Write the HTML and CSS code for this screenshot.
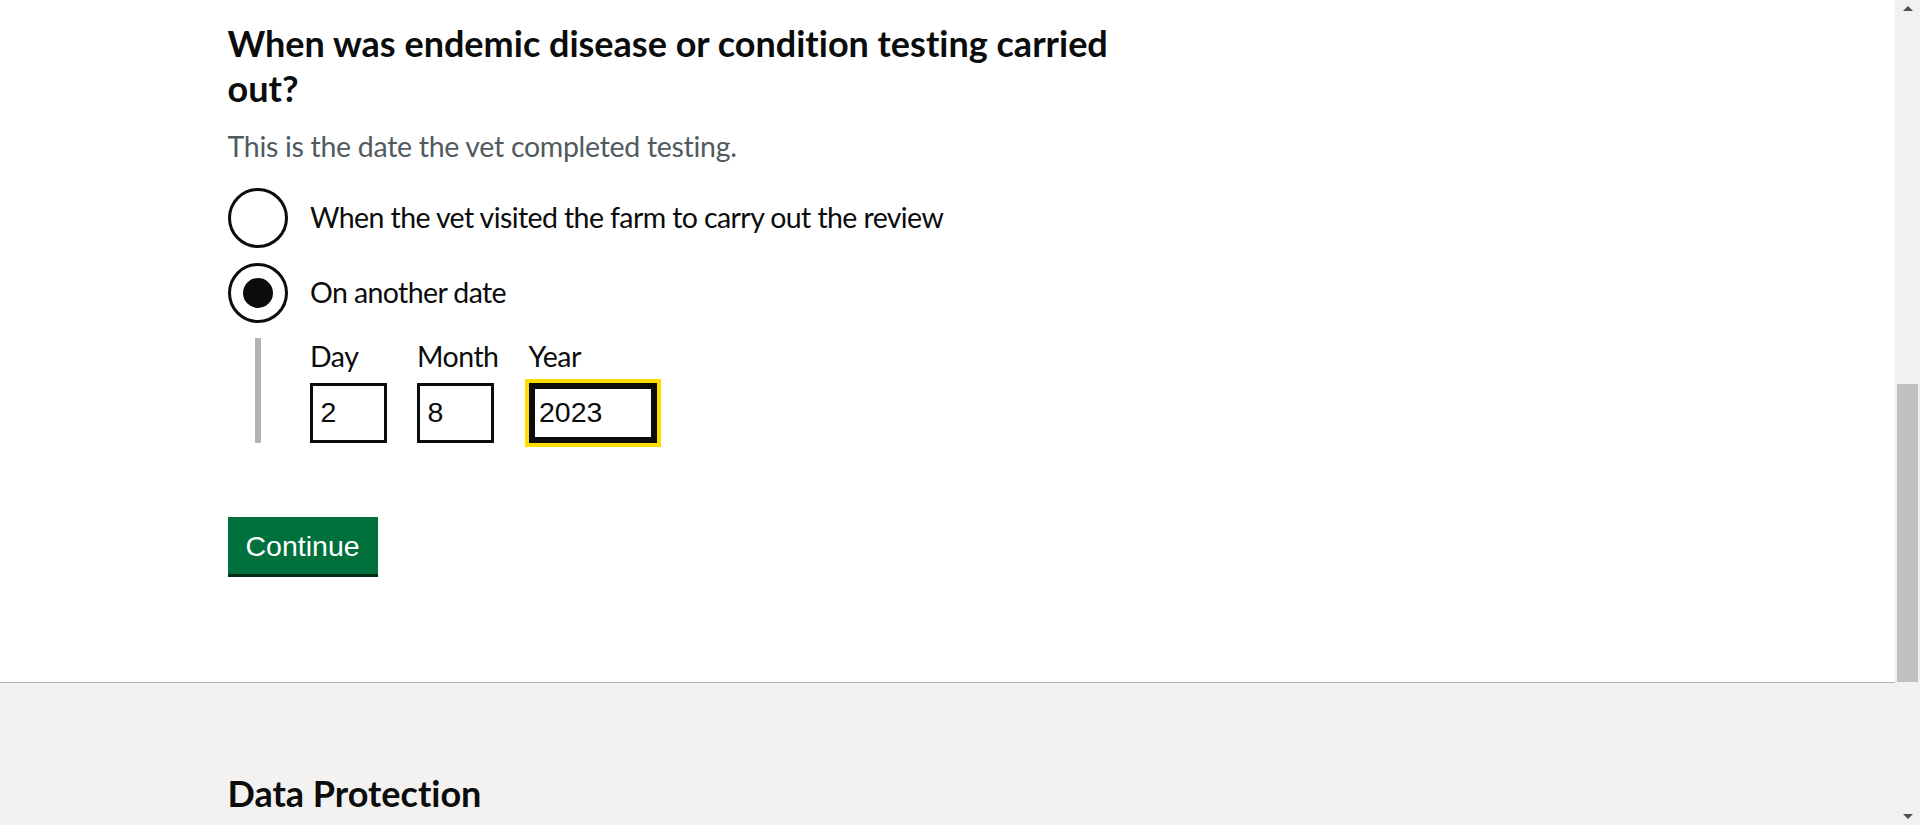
FILE: index.html
```html
<!DOCTYPE html>
<html lang="en">
<head>
<meta charset="utf-8">
<title>When was endemic disease or condition testing carried out?</title>
<link rel="stylesheet" href="styles.css">
</head>
<body>
<div class="viewport">
  <div class="page">
    <main class="main">
      <div class="container">
        <form class="form">
          <fieldset class="fieldset">
            <legend class="legend">When was endemic disease or condition testing carried out?</legend>
            <div class="hint">This is the date the vet completed testing.</div>
            <div class="radios">
              <div class="radio-item">
                <span class="radio-circle"></span>
                <label class="radio-label">When the vet visited the farm to carry out the review</label>
              </div>
              <div class="radio-item">
                <span class="radio-circle radio-checked"></span>
                <label class="radio-label">On another date</label>
              </div>
              <div class="conditional">
                <div class="date-input">
                  <div class="date-item">
                    <label class="date-label">Day</label>
                    <input class="input input-day" type="text" value="2">
                  </div>
                  <div class="date-item">
                    <label class="date-label">Month</label>
                    <input class="input input-month" type="text" value="8">
                  </div>
                  <div class="date-item">
                    <label class="date-label">Year</label>
                    <input class="input input-year input-focus" type="text" value="2023">
                  </div>
                </div>
              </div>
            </div>
          </fieldset>
          <button class="button" type="button">Continue</button>
        </form>
      </div>
    </main>
    <footer class="footer">
      <div class="container">
        <h2 class="footer-heading">Data Protection</h2>
      </div>
    </footer>
  </div>
  <div class="scrollbar">
    <div class="sb-arrow"><span class="tri-up"></span></div>
    <div class="sb-track"><div class="sb-thumb"></div></div>
    <div class="sb-arrow"><span class="tri-down"></span></div>
  </div>
</div>
</body>
</html>
```

FILE: styles.css
```css
html, body {
  margin: 0;
  padding: 0;
  background: #ffffff;
}

.viewport {
  display: flex;
  height: 825px;
  overflow: hidden;
}

.page {
  flex: 1;
  min-width: 0;
  font-family: Lato, "Noto Sans", sans-serif;
  font-variant-ligatures: none;
  color: #0b0c0c;
}

.container {
  width: 1440px;
  margin: 0 auto;
}

.main {
  padding-top: 21px;
  padding-bottom: 60px;
}

.fieldset {
  border: 0;
  margin: 0 0 59px 0;
  padding: 0;
  min-width: 0;
  width: 950px;
}

.legend {
  padding: 0;
  font-size: 36px;
  line-height: 45px;
  font-weight: 700;
  margin-bottom: 17px;
  display: table;
  max-width: 100%;
}

.hint {
  font-size: 28.5px;
  line-height: 37.5px;
  letter-spacing: -0.3px;
  color: #505a5f;
  margin-bottom: 22px;
}

.radios {
  display: flex;
  flex-direction: column;
}

.radio-item {
  display: flex;
  align-items: center;
  min-height: 60px;
  margin-bottom: 15px;
}

.radio-circle {
  box-sizing: border-box;
  width: 60px;
  height: 60px;
  border: 3px solid #0b0c0c;
  border-radius: 50%;
  flex: none;
  display: flex;
  align-items: center;
  justify-content: center;
}

.radio-checked::after {
  content: "";
  width: 30px;
  height: 30px;
  border-radius: 50%;
  background: #0b0c0c;
}

.radio-label {
  font-size: 28.5px;
  line-height: 37.5px;
  letter-spacing: -0.6px;
  padding: 0 22.5px;
}

.conditional {
  margin-left: 27px;
  margin-bottom: 15px;
  border-left: 6px solid #b1b4b6;
  padding-left: 49.5px;
}

.date-input {
  display: flex;
  align-items: flex-start;
}

.date-item {
  display: flex;
  flex-direction: column;
  margin-right: 30px;
}

.date-label {
  font-size: 28.5px;
  line-height: 37.5px;
  letter-spacing: -0.5px;
  margin-bottom: 7.5px;
}

.input {
  box-sizing: border-box;
  height: 60px;
  margin: 0;
  padding: 7.5px;
  border: 3px solid #0b0c0c;
  border-radius: 0;
  font-family: "Liberation Sans", Arial, sans-serif;
  font-size: 28.5px;
  line-height: 1.25;
  color: #0b0c0c;
  background: #ffffff;
}

.input-day,
.input-month {
  width: 77px;
}

.input-year {
  width: 128px;
}

.input-focus {
  outline: 4.5px solid #ffdd00;
  outline-offset: 0;
  box-shadow: inset 0 0 0 3px #0b0c0c;
}

.button {
  display: block;
  box-sizing: border-box;
  margin: 0 0 48px 0;
  padding: 12px 15px 10.5px;
  border: 3px solid transparent;
  border-radius: 0;
  background: #00703c;
  color: #ffffff;
  box-shadow: 0 3px 0 #002d18;
  font-family: "Liberation Sans", Arial, sans-serif;
  font-size: 28.5px;
  line-height: 1;
  cursor: pointer;
}

.footer {
  background: #f3f2f1;
  border-top: 1px solid #b1b4b6;
  padding-top: 88px;
  padding-bottom: 60px;
}

.footer-heading {
  margin: 0;
  font-size: 36px;
  line-height: 45px;
  font-weight: 700;
}

.scrollbar {
  width: 25px;
  flex: none;
  background: #f1f1f1;
  display: flex;
  flex-direction: column;
}

.sb-arrow {
  height: 17px;
  display: flex;
  align-items: center;
  justify-content: center;
}

.tri-up {
  width: 0;
  height: 0;
  border-left: 5px solid transparent;
  border-right: 5px solid transparent;
  border-bottom: 5px solid #505050;
}

.tri-down {
  width: 0;
  height: 0;
  border-left: 5px solid transparent;
  border-right: 5px solid transparent;
  border-top: 5px solid #505050;
}

.sb-track {
  flex: 1;
  display: flex;
  flex-direction: column;
  align-items: center;
}

.sb-thumb {
  margin-top: 367px;
  width: 21px;
  height: 298px;
  background: #c1c1c1;
}
```
